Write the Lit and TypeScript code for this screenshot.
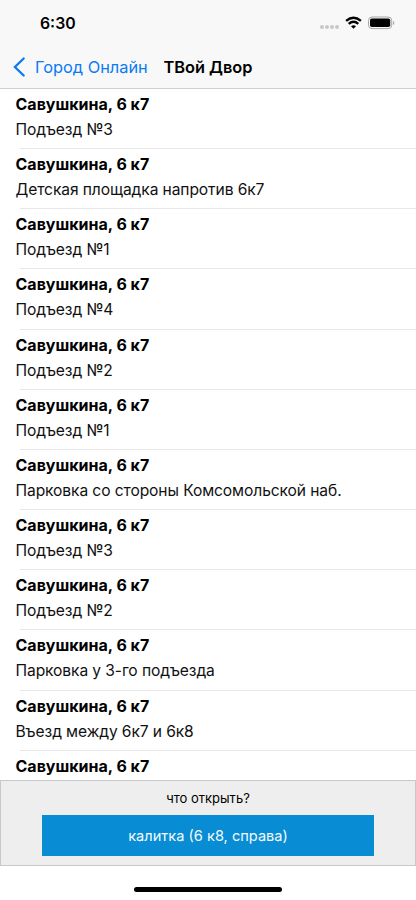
import { LitElement, html, css, nothing } from "lit";
import { customElement } from "lit/decorators.js";

const places = [
  "Подъезд №3", "Детская площадка напротив 6к7", "Подъезд №1", "Подъезд №4",
  "Подъезд №2", "Подъезд №1", "Парковка со стороны Комсомольской наб.",
  "Подъезд №3", "Подъезд №2", "Парковка у 3-го подъезда", "Въезд между 6к7 и 6к8", "",
];

@customElement("app-root")
export class AppRoot extends LitElement {
  static styles = css`
    :host { display: flex; flex-direction: column; width: 416px; height: 900px; background: #fff; color: #000;
      font-family: Inter, "Liberation Sans", sans-serif; overflow: hidden; }
    header { height: 88px; flex: none; background: #f8f8f8; border-bottom: 1px solid #cfcfd2; }
    .status { height: 45px; display: flex; align-items: center; padding: 1px 18px 0 40px; box-sizing: border-box; }
    .time { font-size: 15.8px; font-weight: 600; flex: 1; }
    .status svg { display: block; }
    .nav { height: 43px; display: flex; align-items: center; padding-left: 13px; font-size: 16.35px; color: #0a7af5; }
    .back { margin-right: 9px; }
    .link { width: 128.4px; white-space: nowrap; }
    .title { color: #000; font-weight: 600; white-space: nowrap; }
    .list { flex: 1; min-height: 0; overflow: hidden; }
    .row { height: 60.17px; box-sizing: border-box; padding: 3px 0 0 15.5px; white-space: nowrap;
      background: linear-gradient(#e8e8e8, #e8e8e8) 20px 100% / 100% 1px no-repeat; }
    .row:last-child { height: auto; background: none; }
    .name { font-size: 16px; line-height: 25px; font-weight: 700; }
    .place { font-size: 15.6px; line-height: 25px; letter-spacing: -0.1px; color: #111; }
    .panel { flex: none; height: 86px; box-sizing: border-box; background: #eee; border: 1px solid #c8c8c8;
      display: flex; flex-direction: column; align-items: center; }
    .ask { font-size: 13px; line-height: 35px; height: 34px; }
    .open { width: 332px; height: 41px; background: #088cd3; color: #f4faff; border: 0; padding: 0; font: 14.6px Inter, sans-serif; }
    footer { flex: none; height: 34px; display: flex; justify-content: center; align-items: flex-end; }
    .home { width: 148px; height: 5px; border-radius: 3px; background: #000; margin-bottom: 8px; }
  `;

  render() {
    return html`
      <header>
        <div class="status">
          <span class="time">6:30</span>
          <svg width="80" height="18" viewBox="0 0 80 18">
            <g fill="#c8c8c8"><circle cx="4" cy="13" r="2"/><circle cx="9" cy="13" r="2"/><circle cx="14" cy="13" r="2"/><circle cx="19" cy="13" r="2"/></g>
            <g fill="none" stroke="#000" stroke-width="2.3"><path d="M28.1 6.9Q35.5 .7 42.9 6.9"/><path d="M30.7 9.8Q35.5 5.7 40.3 9.8"/></g><path d="M33 12.2Q35.5 10.3 38 12.2L35.5 14.7Z"/>
            <rect x="50.5" y="3" width="23.2" height="11.6" rx="3.5" fill="none" stroke="#a6a6a6"/><rect x="52" y="4.5" width="20.2" height="8.6" rx="1.8"/><path d="M75 7v4q1.3-.5 1.3-2T75 7" fill="#aaa"/>
          </svg>
        </div>
        <div class="nav">
          <svg class="back" width="13" height="22" viewBox="0 0 13 22"><path d="M10.7 2.5L1.9 11L10.7 19.5" fill="none" stroke="#0a7af5" stroke-width="2.3" stroke-linecap="round"/></svg>
          <span class="link">Город Онлайн</span><span class="title">ТВой Двор</span>
        </div>
      </header>
      <div class="list">${places.map((p) => html`<div class="row"><div class="name">Савушкина, 6 к7</div>${p ? html`<div class="place">${p}</div>` : nothing}</div>`)}</div>
      <div class="panel"><div class="ask">что открыть?</div><button class="open">калитка (6 к8, справа)</button></div>
      <footer><div class="home"></div></footer>
    `;
  }
}
